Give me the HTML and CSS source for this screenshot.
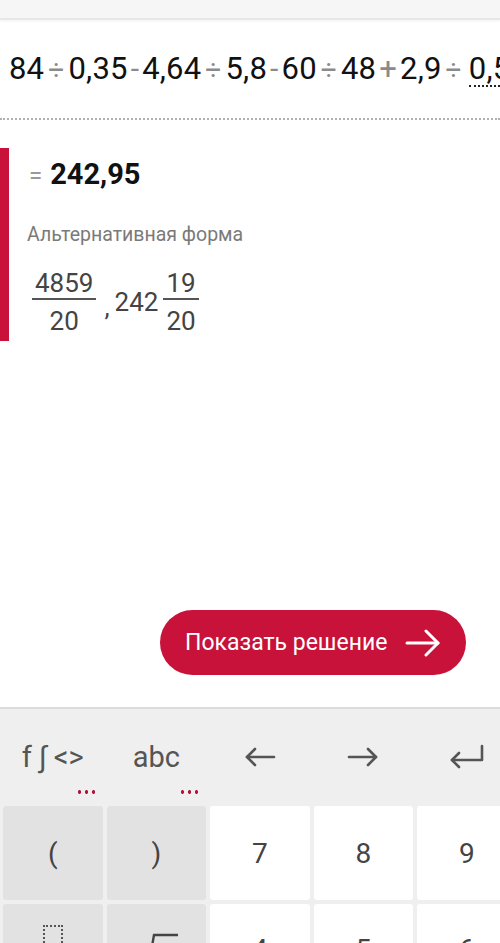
FILE: index.html
```html
<!DOCTYPE html>
<html lang="ru">
<head>
  <meta charset="UTF-8" />
  <meta name="viewport" content="width=device-width, initial-scale=1.0"/>
  <title>Калькулятор</title>
  <link rel="stylesheet" href="styles.css">
</head>
<body>
  <div class="topbar"></div>

  <div class="expr-row">
    <div class="expr">
      <span>84</span><span class="op">÷</span><span>0,35</span><span class="op minus">-</span><span>4,64</span><span class="op">÷</span><span>5,8</span><span class="op minus">-</span><span>60</span><span class="op">÷</span><span>48</span><span class="op plus">+</span><span>2,9</span><span class="op">÷</span><span class="cursor-num">0,58</span>
    </div>
  </div>

  <div class="divider"></div>

  <section class="result">
    <div class="answer"><span class="eq">=</span><span class="value">242,95</span></div>
    <div class="alt-label">Альтернативная форма</div>
    <div class="alt-forms">
      <span class="frac"><span class="num">4859</span><span class="den">20</span></span>
      <span class="sep">,</span>
      <span class="whole">242</span>
      <span class="frac"><span class="num">19</span><span class="den">20</span></span>
    </div>
  </section>

  <div class="action">
    <button class="btn-solution">
      Показать решение
      <svg width="36" height="28" viewBox="0 0 36 28" fill="none" stroke="#fff" stroke-width="3" stroke-linecap="round" stroke-linejoin="round">
        <path d="M2 14 H33"/>
        <path d="M21 2 L33 14 L21 26"/>
      </svg>
    </button>
  </div>

  <div class="keyboard">
    <div class="toolbar">
      <div class="tool"><span>f ∫ &lt;&gt;</span><i class="dots"></i></div>
      <div class="tool"><span>abc</span><i class="dots"></i></div>
      <div class="tool">
        <svg width="32" height="22" viewBox="0 0 32 22" fill="none" stroke="#555" stroke-width="2.6" stroke-linecap="round" stroke-linejoin="round">
          <path d="M30 11 H3"/><path d="M11 3 L3 11 L11 19"/>
        </svg>
      </div>
      <div class="tool">
        <svg width="32" height="22" viewBox="0 0 32 22" fill="none" stroke="#555" stroke-width="2.6" stroke-linecap="round" stroke-linejoin="round">
          <path d="M2 11 H29"/><path d="M21 3 L29 11 L21 19"/>
        </svg>
      </div>
      <div class="tool">
        <svg width="36" height="26" viewBox="0 0 36 26" fill="none" stroke="#555" stroke-width="2.6" stroke-linecap="round" stroke-linejoin="round">
          <path d="M33 2 V16 H3"/><path d="M10 9 L3 16 L10 23"/>
        </svg>
      </div>
    </div>

    <div class="keys">
      <div class="key fn">(</div>
      <div class="key fn">)</div>
      <div class="key">7</div>
      <div class="key">8</div>
      <div class="key">9</div>
      <div class="key fn"><span class="box"></span></div>
      <div class="key fn">
        <svg class="root" width="44" height="40" viewBox="0 0 44 40" fill="none" stroke="#444" stroke-width="2.4" stroke-linecap="square">
          <path d="M2 30 L7 27 L14 40 L20 6 H43"/>
        </svg>
      </div>
      <div class="key low">4</div>
      <div class="key low">5</div>
      <div class="key low">6</div>
    </div>
  </div>
</body>
</html>
```

FILE: styles.css
```css
* {
  margin: 0;
  padding: 0;
  box-sizing: border-box;
  font-family: Roboto, 'Noto Sans', sans-serif;
}

body {
  width: 500px;
  height: 943px;
  overflow: hidden;
  background: #fff;
  color: #111;
}

.topbar {
  height: 20px;
  background: #f6f6f6;
  border-bottom: 2px solid #e8e8e8;
  box-shadow: 0 1px 3px rgba(0,0,0,0.06);
}

/* Expression line */
.expr-row {
  height: 98px;
  padding: 29px 0 0 9px;
  overflow: hidden;
  white-space: nowrap;
}

.expr {
  font-size: 31px;
  line-height: 40px;
  letter-spacing: 0.2px;
  color: #111;
  display: flex;
  align-items: baseline;
}

.expr .op {
  color: #8a8a8a;
  font-size: 28px;
  padding: 0 4px;
}

.expr .minus {
  font-size: 30px;
  padding: 0 3px;
}

.expr .plus {
  font-size: 31px;
  padding: 0 3px;
}

.cursor-num {
  margin-left: 3px;
  line-height: 32px;
  border-bottom: 2px dotted #222;
}

.divider {
  border-top: 2px dotted #b0b0b0;
}

/* Result */
.result {
  margin-top: 28px;
  height: 193px;
  border-left: 9px solid #c8123a;
  padding: 6px 0 0 20px;
}

.answer {
  display: flex;
  align-items: baseline;
  gap: 8px;
  line-height: 40px;
}

.answer .eq {
  color: #999;
  font-size: 24px;
}

.answer .value {
  font-size: 29px;
  font-weight: 700;
  color: #111;
}

.alt-label {
  margin-top: 27px;
  margin-left: -2px;
  font-size: 19.5px;
  color: #7a7a7a;
  line-height: 24px;
}

.alt-forms {
  margin-top: 21px;
  display: flex;
  align-items: center;
  color: #444;
  font-size: 26px;
  padding-left: 3px;
}

.frac {
  display: inline-flex;
  flex-direction: column;
  align-items: center;
}

.frac .num {
  line-height: 30px;
  padding: 0 3px;
  border-bottom: 2px solid #555;
}

.frac .den {
  line-height: 30px;
  padding-top: 6px;
}

.alt-forms .sep {
  margin: 10px 5px 0 8px;
}

.alt-forms .whole {
  margin-right: 5px;
}

/* Button */
.action {
  height: 366px;
  padding: 269px 0 0 160px;
}

.btn-solution {
  width: 306px;
  height: 65px;
  border: none;
  border-radius: 33px;
  background: #c8123a;
  color: #fff;
  font-size: 23px;
  display: flex;
  align-items: center;
  gap: 18px;
  padding-left: 25px;
}

/* Keyboard */
.keyboard {
  background: #efefef;
  border-top: 2px solid #dcdcdc;
  height: 236px;
  overflow: hidden;
}

.toolbar,
.keys {
  display: grid;
  grid-template-columns: repeat(5, 99.5px);
  column-gap: 4px;
  padding-left: 3px;
}

.toolbar {
  height: 97px;
}

.tool {
  position: relative;
  display: flex;
  align-items: center;
  justify-content: center;
  font-size: 29px;
  color: #555;
  padding-bottom: 1px;
}

.dots {
  position: absolute;
  bottom: 12px;
  right: 7px;
  width: 20px;
  height: 4px;
  background: radial-gradient(circle, #b5123a 1.6px, transparent 2px) 0 0 / 7px 4px repeat-x;
}

.keys {
  grid-auto-rows: 94px;
  row-gap: 4px;
}

.key {
  background: #fff;
  border-radius: 3px;
  display: flex;
  align-items: center;
  justify-content: center;
  font-size: 28px;
  color: #444;
}

.key.fn {
  background: #e2e2e2;
}

.key.low {
  padding-bottom: 4px;
}

.box {
  width: 20px;
  height: 30px;
  border: 2px dotted #555;
  margin-bottom: 22px;
}

.root {
  margin-bottom: 4px;
}
```
